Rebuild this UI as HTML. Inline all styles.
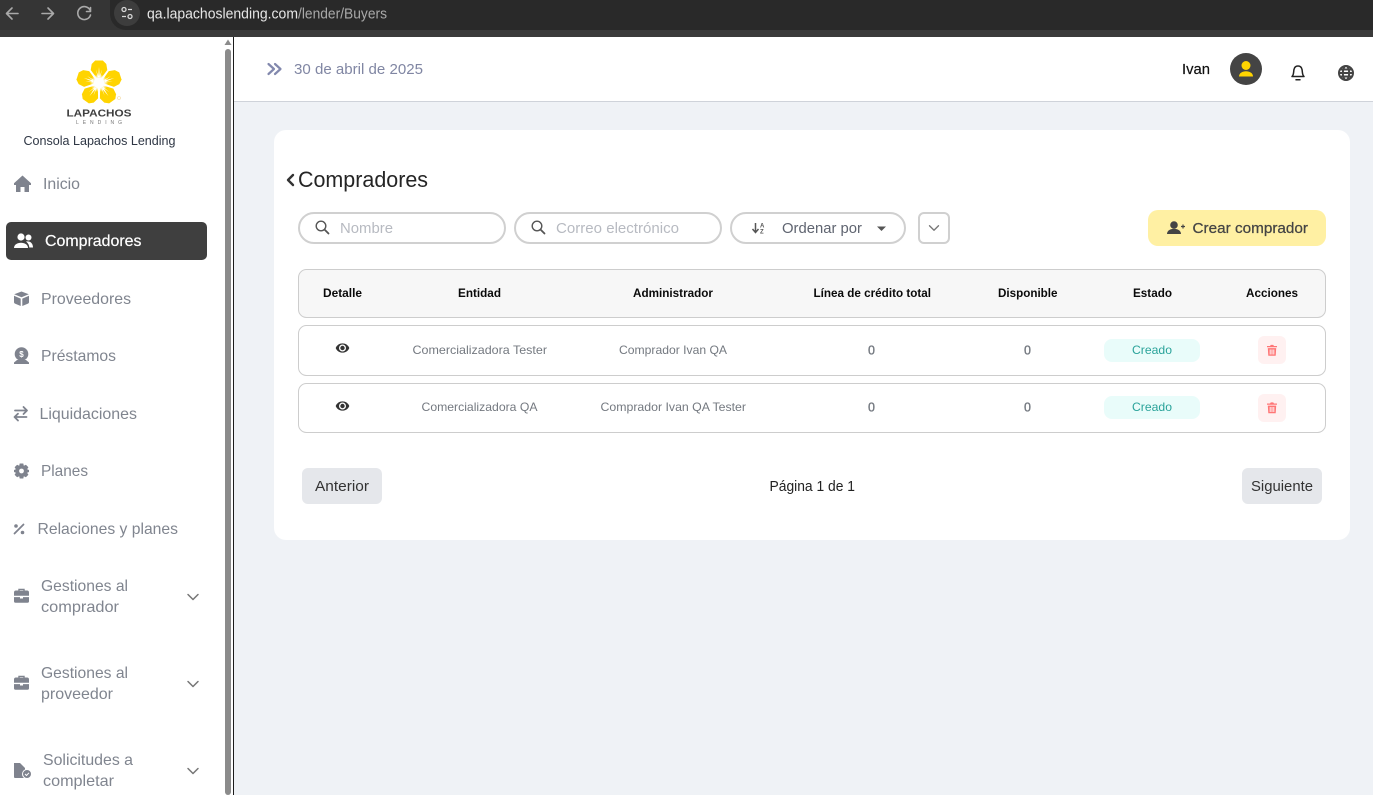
<!DOCTYPE html>
<html lang="es"><head><meta charset="utf-8"><title>Compradores</title>
<style>
html,body{margin:0;padding:0;width:1373px;height:795px;overflow:hidden;background:#fff}
svg{display:block}
text{font-family:"Liberation Sans",sans-serif}
</style></head><body>
<svg xmlns="http://www.w3.org/2000/svg" width="1373" height="795" viewBox="0 0 1373 795">
<defs>
<radialGradient id="glow"><stop offset="0" stop-color="#fff"/><stop offset=".55" stop-color="#fff"/><stop offset="1" stop-color="#fff" stop-opacity="0"/></radialGradient>
<g id="petal"><path d="M0 -2 L-8.300 -13 L-7.300 -19 L-3.800 -22.500 L3.800 -22.500 L7.300 -19 L8.300 -13 Z" fill="#ffd400"/>
<path d="M0 -16 L-.8 -6 L.8 -6Z M-3 -13.500 L-1.300 -6 L-.4 -6Z M3 -13.500 L1.300 -6 L.4 -6Z" fill="#fff"/></g>
<g id="search" fill="none" stroke="#555" stroke-width="1.400"><circle cx="6" cy="6" r="4.800"/><path d="M9.600 9.600 L13.500 13.500" stroke-linecap="round" stroke-width="1.800"/></g>
<g id="chev" fill="none" stroke="#777" stroke-width="1.500" stroke-linecap="round" stroke-linejoin="round"><path d="M-5 -2.500 L0 2.500 L5 -2.500"/></g>
<g id="brief" fill="#7f838e"><path d="M-3.200 -6 V-7.800 H3.200 V-6 H5.500 A2 2 0 0 1 7.500 -4 V-.8 H-7.500 V-4 A2 2 0 0 1 -5.500 -6 Z M-1.800 -6 H1.800 V-6.500 H-1.800Z" fill-rule="evenodd"/><path d="M-7.500 .6 H-1.500 V2 H1.500 V.6 H7.500 V4.800 A1.500 1.500 0 0 1 6 6.300 H-6 A1.500 1.500 0 0 1 -7.500 4.800Z"/></g>
<g id="eye"><path d="M-6.800 0 C-4.500 -6.200 4.500 -6.200 6.800 0 C4.500 6.200 -4.500 6.200 -6.800 0Z" fill="#333"/><circle r="3.500" fill="#fff"/><circle r="2.200" fill="#333"/></g>
<g id="trash" fill="#ff7676"><path d="M-5 -4.500 H-2 L-1.200 -5.600 H1.200 L2 -4.500 H5 V-3.200 H-5Z"/><path d="M-4.200 -2.400 H4.200 L3.700 5.200 H-3.700Z M-2.300 -1 V4 H-1.300 V-1Z M-.5 -1 V4 H.5 V-1Z M1.300 -1 V4 H2.300 V-1Z" fill-rule="evenodd"/></g>
</defs>

<!-- browser bar -->
<rect width="1373" height="37" fill="#3a3a3a"/>
<rect x="0" y="0" width="1373" height="30" fill="#353535"/>
<path d="M124 0 H1373 V30 H126 A16 16 0 0 1 110 14 V0Z" fill="#292929"/>
<circle cx="127" cy="13" r="13" fill="#3d3d3d"/>
<g fill="none" stroke="#a9a9a9" stroke-width="1.600" stroke-linecap="round" stroke-linejoin="round">
<path d="M18 13.500 H7 M12 8 L6.500 13.500 L12 19"/>
<path d="M42 13.500 H53 M48 8 L53.500 13.500 L48 19"/>
<path d="M90 10 A6.500 6.500 0 1 0 90.500 15 M90.500 7.500 V11.500 H86.500"/>
</g>
<g fill="none" stroke="#d8d8d8" stroke-width="1.300"><circle cx="124" cy="9.500" r="2"/><path d="M128 9.500 H132 M122 16.500 H126"/><circle cx="130" cy="16.500" r="2"/></g>
<text x="147" y="18.500" font-size="14.500" fill="#e6e6e6" textLength="151" lengthAdjust="spacingAndGlyphs">qa.lapachoslending.com</text>
<text x="298" y="18.500" font-size="14.500" fill="#a9a9a9" textLength="89" lengthAdjust="spacingAndGlyphs">/lender/Buyers</text>

<!-- page layout -->
<rect x="0" y="37" width="1373" height="758" fill="#fff"/>
<rect x="234" y="102" width="1139" height="693" fill="#eff2f6"/>
<rect x="234" y="101" width="1139" height="1" fill="#cfd3da"/>
<rect x="233" y="37" width="1" height="758" fill="#1c1c1c"/>
<rect x="225" y="49" width="6" height="746" rx="3" fill="#8b8b8b"/>
<path d="M228 39.500 L231.500 45 H224.500Z" fill="#8b8b8b"/>

<!-- logo -->
<g transform="translate(99 83)">
<use href="#petal"/><use href="#petal" transform="rotate(72)"/><use href="#petal" transform="rotate(144)"/><use href="#petal" transform="rotate(216)"/><use href="#petal" transform="rotate(288)"/>
<circle r="9" fill="url(#glow)"/>
</g>
<circle cx="119" cy="98" r="1.500" fill="none" stroke="#f3d9a0" stroke-width=".6"/>
<text x="66.500" y="116.500" font-size="10" font-weight="700" fill="#3f3f3f" textLength="65" lengthAdjust="spacingAndGlyphs">LAPACHOS</text>
<text x="76" y="124" font-size="5" fill="#777" textLength="46">LENDING</text>
<text x="23.500" y="145" font-size="12.500" fill="#2e3644" textLength="152" lengthAdjust="spacingAndGlyphs">Consola Lapachos Lending</text>

<!-- nav -->
<rect x="6" y="222" width="201" height="38" rx="5" fill="#3f3f3f"/>
<g font-size="16" fill="#80858f">
<text x="43" y="189" textLength="37" lengthAdjust="spacingAndGlyphs">Inicio</text>
<text x="45" y="246" fill="#fff" stroke="#fff" stroke-width=".2" textLength="96.500" lengthAdjust="spacingAndGlyphs">Compradores</text>
<text x="41" y="304" textLength="90" lengthAdjust="spacingAndGlyphs">Proveedores</text>
<text x="41" y="361" textLength="75" lengthAdjust="spacingAndGlyphs">Préstamos</text>
<text x="39.500" y="419" textLength="97.500" lengthAdjust="spacingAndGlyphs">Liquidaciones</text>
<text x="41" y="476" textLength="47" lengthAdjust="spacingAndGlyphs">Planes</text>
<text x="37.500" y="534" textLength="140.500" lengthAdjust="spacingAndGlyphs">Relaciones y planes</text>
<text x="41" y="591" textLength="87" lengthAdjust="spacingAndGlyphs">Gestiones al</text>
<text x="41" y="612" textLength="78" lengthAdjust="spacingAndGlyphs">comprador</text>
<text x="41" y="678" textLength="87" lengthAdjust="spacingAndGlyphs">Gestiones al</text>
<text x="41" y="699" textLength="72" lengthAdjust="spacingAndGlyphs">proveedor</text>
<text x="43" y="765" textLength="90" lengthAdjust="spacingAndGlyphs">Solicitudes a</text>
<text x="43" y="786" textLength="71" lengthAdjust="spacingAndGlyphs">completar</text>
</g>
<!-- nav icons -->
<path d="M22.500 175.500 L14 183.300 V185 H16 V192 H20.500 V187 H24.500 V192 H29 V185 H31 V183.300Z" fill="#7f838e"/>
<g fill="#fff"><circle cx="21" cy="237" r="3.600"/><circle cx="28.500" cy="237.500" r="3"/><path d="M14 248 C14 241 28 241 28 248Z"/><path d="M26 241.500 C30 240.800 33 243 33 247.500 H29.300 C29.200 245 28 243 26 241.500Z"/></g>
<path d="M21.500 291.500 L28.800 294.300 L21.500 297.300 L14.200 294.300Z M14 295.800 L20.700 298.600 V306 L15 303.600 A1.500 1.500 0 0 1 14 302Z M29 295.800 L22.300 298.600 V306 L28 303.600 A1.500 1.500 0 0 0 29 302Z" fill="#7f838e"/>
<circle cx="21.500" cy="354" r="6.800" fill="#7f838e"/><path d="M14 364 V362.500 L17 360 H26 L29 362.500 V364Z" fill="#7f838e"/>
<text x="21.500" y="357" font-size="8" font-weight="700" fill="#fff" text-anchor="middle">$</text>
<g fill="none" stroke="#7f838e" stroke-width="1.800" stroke-linecap="round" stroke-linejoin="round"><path d="M15 410.500 H26.500 M23.500 407 L27 410.500 L23.500 414"/><path d="M26.500 417 H15 M18 413.700 L14.500 417 L18 420.500"/></g>
<g transform="translate(21.500 471)" fill="#7f838e"><path d="M-1.800 -7.500 H1.800 L2.300 -5.300 L4.400 -6.300 L6.900 -3.800 L5.600 -1.800 L7.500 -1 V1 L5.600 1.800 L6.900 3.800 L4.400 6.300 L2.300 5.300 L1.800 7.500 H-1.800 L-2.300 5.300 L-4.400 6.300 L-6.900 3.800 L-5.600 1.800 L-7.500 1 V-1 L-5.600 -1.800 L-6.900 -3.800 L-4.400 -6.300 L-2.300 -5.300Z"/><circle r="2.400" fill="#fff"/></g>
<g fill="#7f838e"><path d="M14.500 533.500 L23.500 524.500" stroke="#7f838e" stroke-width="1.800" stroke-linecap="round"/><circle cx="16" cy="526" r="1.800"/><circle cx="22.500" cy="532.500" r="1.800"/></g>
<use href="#brief" x="21.500" y="596.500"/>
<use href="#brief" x="21.500" y="683.500"/>
<path d="M14 763 H20 L25 768 V778 H15 A1 1 0 0 1 14 777Z" fill="#7f838e"/>
<circle cx="27" cy="774" r="4.500" fill="#7f838e" stroke="#fff" stroke-width="1"/>
<path d="M25 774 L26.500 775.500 L29 772.800" fill="none" stroke="#fff" stroke-width="1"/>
<use href="#chev" x="193" y="597"/><use href="#chev" x="193" y="684"/><use href="#chev" x="193" y="771"/>

<!-- header -->
<g fill="none" stroke="#8288ad" stroke-width="2.200" stroke-linecap="round" stroke-linejoin="round"><path d="M268.500 64 L274 69 L268.500 74"/><path d="M275 64 L280.500 69 L275 74"/></g>
<text x="294" y="74" font-size="15" fill="#8086a3" textLength="129" lengthAdjust="spacingAndGlyphs">30 de abril de 2025</text>
<text x="1182" y="74" font-size="15" stroke="#111" stroke-width=".2" fill="#111" textLength="28" lengthAdjust="spacingAndGlyphs">Ivan</text>
<circle cx="1246" cy="69" r="16" fill="#444"/>
<circle cx="1246" cy="65.500" r="4.500" fill="#ffd400"/>
<path d="M1239 76.500 C1239 69.500 1253 69.500 1253 76.500Z" fill="#ffd400"/>
<path d="M1292 76.500 C1294 75 1293.500 71 1294 69.500 C1294.500 67 1296 66 1298 66 C1300 66 1301.500 67 1302 69.500 C1302.500 71 1302 75 1304 76.500Z M1296 79.700 H1300" fill="none" stroke="#222" stroke-width="1.500" stroke-linejoin="round" stroke-linecap="round"/>
<g fill="none" stroke="#444" stroke-width="2"><circle cx="1346" cy="73" r="7"/><ellipse cx="1346" cy="73" rx="3.200" ry="7"/><path d="M1339 73 H1353 M1340 69.500 H1352 M1340 76.500 H1352"/></g>

<!-- card -->
<rect x="274" y="130" width="1076" height="410" rx="12" fill="#fff"/>
<path d="M293 175 L288 180 L293 185" fill="none" stroke="#333" stroke-width="2.400" stroke-linecap="round" stroke-linejoin="round"/>
<text x="298" y="187" font-size="22" fill="#252525" textLength="130" lengthAdjust="spacingAndGlyphs">Compradores</text>

<!-- filters -->
<g fill="#fff" stroke="#d0d0d0" stroke-width="2">
<rect x="299" y="213" width="206" height="30" rx="15"/>
<rect x="515" y="213" width="206" height="30" rx="15"/>
<rect x="731" y="213" width="174" height="30" rx="15"/>
<rect x="919" y="213" width="30" height="30" rx="5"/>
</g>
<use href="#search" x="315" y="220"/><use href="#search" x="531" y="220"/>
<text x="340" y="233" font-size="15" fill="#b7bac1" textLength="53" lengthAdjust="spacingAndGlyphs">Nombre</text>
<text x="556" y="233" font-size="15" fill="#b7bac1" textLength="123" lengthAdjust="spacingAndGlyphs">Correo electrónico</text>
<path d="M755.500 223 V232 M752.500 229 L755.500 232.500 L758.500 229" fill="none" stroke="#555" stroke-width="1.500"/>
<text x="760" y="227.500" font-size="6" font-weight="700" fill="#555">A</text>
<text x="760" y="233.500" font-size="6" font-weight="700" fill="#555">Z</text>
<text x="782" y="233" font-size="15" fill="#5f6470" textLength="80" lengthAdjust="spacingAndGlyphs">Ordenar por</text>
<path d="M877 226.500 H886 L881.500 231Z" fill="#555"/>
<g transform="translate(934 228) scale(.9)"><use href="#chev"/></g>
<rect x="1148" y="210" width="178" height="36" rx="10" fill="#fff0a3"/>
<circle cx="1174" cy="225" r="3.800" fill="#444"/>
<path d="M1167 234 C1167 227 1181 227 1181 234Z" fill="#444"/>
<path d="M1181 226.500 H1185 M1183 224.500 V228.500" stroke="#444" stroke-width="1.200"/>
<text x="1192.500" y="233" font-size="15" fill="#444" stroke="#444" stroke-width=".25" textLength="115.500" lengthAdjust="spacingAndGlyphs">Crear comprador</text>

<!-- table -->
<rect x="298.500" y="269.500" width="1027" height="48" rx="8" fill="#f7f7f7" stroke="#cdcdcd"/>
<rect x="298.500" y="325.500" width="1027" height="50" rx="8" fill="#fff" stroke="#cdcdcd"/>
<rect x="298.500" y="383.500" width="1027" height="49" rx="8" fill="#fff" stroke="#cdcdcd"/>
<g font-size="12" font-weight="700" fill="#0a0a0a">
<text x="323" y="297" textLength="39" lengthAdjust="spacingAndGlyphs">Detalle</text>
<text x="458" y="297" textLength="43" lengthAdjust="spacingAndGlyphs">Entidad</text>
<text x="633" y="297" textLength="80" lengthAdjust="spacingAndGlyphs">Administrador</text>
<text x="813.500" y="297" textLength="117.500" lengthAdjust="spacingAndGlyphs">Línea de crédito total</text>
<text x="998" y="297" textLength="59.500" lengthAdjust="spacingAndGlyphs">Disponible</text>
<text x="1133" y="297" textLength="39" lengthAdjust="spacingAndGlyphs">Estado</text>
<text x="1246" y="297" textLength="52" lengthAdjust="spacingAndGlyphs">Acciones</text>
</g>
<g font-size="12" fill="#747980">
<text x="412.500" y="354" textLength="134.500" lengthAdjust="spacingAndGlyphs">Comercializadora Tester</text>
<text x="619" y="354" textLength="108" lengthAdjust="spacingAndGlyphs">Comprador Ivan QA</text>
<text x="421.500" y="411" textLength="116" lengthAdjust="spacingAndGlyphs">Comercializadora QA</text>
<text x="600.500" y="411" textLength="145.500" lengthAdjust="spacingAndGlyphs">Comprador Ivan QA Tester</text>
<g stroke="#747980" stroke-width=".35" font-size="12.500">
<text x="868" y="354.500">0</text><text x="1024" y="354.500">0</text>
<text x="868" y="411.500">0</text><text x="1024" y="411.500">0</text>
</g>
</g>
<use href="#eye" x="342.500" y="348"/><use href="#eye" x="342.500" y="406"/>
<rect x="1104" y="339" width="96" height="23" rx="8" fill="#e9fcfa"/>
<rect x="1104" y="396" width="96" height="23" rx="8" fill="#e9fcfa"/>
<text x="1132" y="354" font-size="12" fill="#2aa39a" textLength="40" lengthAdjust="spacingAndGlyphs">Creado</text>
<text x="1132" y="411" font-size="12" fill="#2aa39a" textLength="40" lengthAdjust="spacingAndGlyphs">Creado</text>
<rect x="1258" y="336" width="28" height="28" rx="6" fill="#fff1f1"/>
<rect x="1258" y="394" width="28" height="28" rx="6" fill="#fff1f1"/>
<use href="#trash" x="1272" y="350.500"/><use href="#trash" x="1272" y="408"/>

<!-- pagination -->
<rect x="302" y="468" width="80" height="36" rx="6" fill="#e5e7eb"/>
<rect x="1242" y="468" width="80" height="36" rx="6" fill="#e5e7eb"/>
<text x="315" y="491" font-size="15" fill="#333" textLength="54" lengthAdjust="spacingAndGlyphs">Anterior</text>
<text x="1251" y="491" font-size="15" fill="#333" textLength="62" lengthAdjust="spacingAndGlyphs">Siguiente</text>
<text x="769.500" y="491" font-size="15" fill="#222" textLength="85.500" lengthAdjust="spacingAndGlyphs">Página 1 de 1</text>
</svg>
</body></html>
